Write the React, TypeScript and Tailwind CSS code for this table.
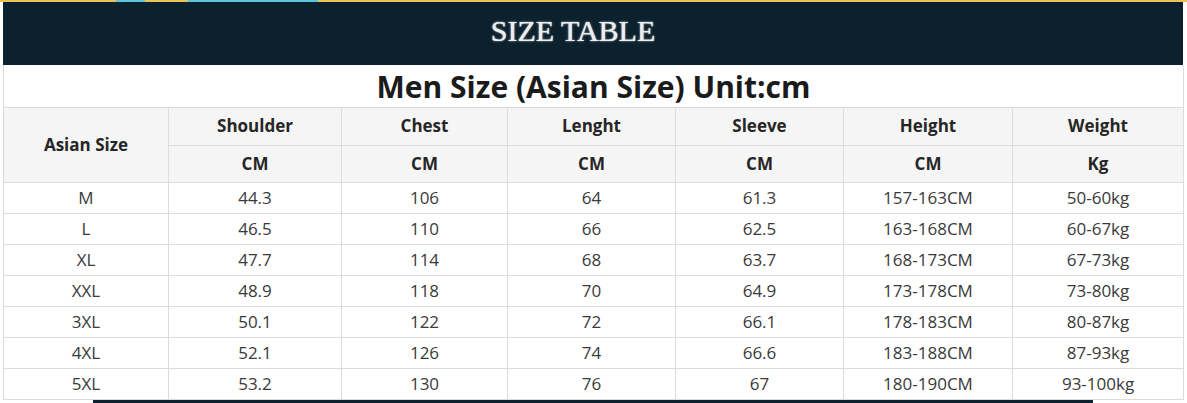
const rows = [
  ["M", "44.3", "106", "64", "61.3", "157-163CM", "50-60kg"],
  ["L", "46.5", "110", "66", "62.5", "163-168CM", "60-67kg"],
  ["XL", "47.7", "114", "68", "63.7", "168-173CM", "67-73kg"],
  ["XXL", "48.9", "118", "70", "64.9", "173-178CM", "73-80kg"],
  ["3XL", "50.1", "122", "72", "66.1", "178-183CM", "80-87kg"],
  ["4XL", "52.1", "126", "74", "66.6", "183-188CM", "87-93kg"],
  ["5XL", "53.2", "130", "76", "67", "180-190CM", "93-100kg"],
];

const headers = [
  { name: "Shoulder", unit: "CM" },
  { name: "Chest", unit: "CM" },
  { name: "Lenght", unit: "CM" },
  { name: "Sleeve", unit: "CM" },
  { name: "Height", unit: "CM" },
  { name: "Weight", unit: "Kg" },
];

const colWidths = ["w-[165px]", "w-[173px]", "w-[166px]", "w-[168px]", "w-[168px]", "w-[169px]", "w-[171px]"];

const App = () => {
  return (
    <div className="h-[403px] w-[1187px] overflow-hidden bg-white font-['Open_Sans',sans-serif]">
      <div className="flex h-[2px]">
        <div className="w-[116px] bg-[#eec257]" />
        <div className="w-[29px] bg-[#5cc6da]" />
        <div className="w-[43px] bg-[#eec257]" />
        <div className="w-[130px] bg-[#5cc6da]" />
        <div className="flex-1 bg-[#eec257]" />
      </div>
      <div className="ml-[3px] flex h-[63px] w-[1180px] items-center justify-center bg-[#0b222e] pb-[5px]">
        <h1 className="mr-[40px] font-['Liberation_Serif',serif] text-[30px] leading-none text-[#ededed] [text-shadow:0_0_1px_#fff,0_0_3px_rgba(255,255,255,0.4)]">
          SIZE TABLE
        </h1>
      </div>
      <table className="ml-[3px] w-[1180px] table-fixed border-collapse text-center text-[17px]">
        <colgroup>
          {colWidths.map((w, i) => (
            <col key={i} className={w} />
          ))}
        </colgroup>
        <tbody>
          <tr className="h-[42px]">
            <td
              colSpan={7}
              className="border border-t-0 border-[#dcdcdc] pt-[3px] text-[30px] font-bold leading-none text-[#1b1b1b]"
            >
              Men Size (Asian Size) Unit:cm
            </td>
          </tr>
          <tr className="h-[38px] bg-[#f5f5f5] font-bold text-[#262626]">
            <td rowSpan={2} className="border border-[#dcdcdc]">
              Asian Size
            </td>
            {headers.map((h) => (
              <td key={h.name} className="border border-[#dcdcdc]">
                {h.name}
              </td>
            ))}
          </tr>
          <tr className="h-[37px] bg-[#f5f5f5] font-bold text-[#262626]">
            {headers.map((h) => (
              <td key={h.name} className="border border-[#dcdcdc]">
                {h.unit}
              </td>
            ))}
          </tr>
          {rows.map((r) => (
            <tr key={r[0]} className="h-[31px] text-[#3a3a3a]">
              {r.map((c, i) => (
                <td key={i} className="border border-[#dcdcdc] leading-none">
                  {c}
                </td>
              ))}
            </tr>
          ))}
        </tbody>
      </table>
      <div className="ml-[93px] h-[4px] w-[1000px] bg-[#0b222e]" />
    </div>
  );
};

export default App;
